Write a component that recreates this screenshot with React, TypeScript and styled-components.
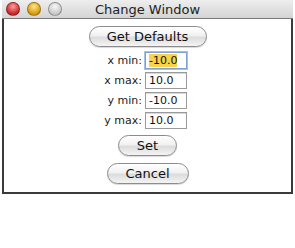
import { Fragment } from "react";
import styled, { createGlobalStyle } from "styled-components";

const GlobalStyle = createGlobalStyle`
    html, body {
        margin: 0;
        padding: 0;
        background: #ffffff;
    }
`

const Page = styled.div`
    width: 295px;
    height: 248px;
    padding: 0 2px;
    box-sizing: border-box;
    background: #ffffff;
`

const Window = styled.div`
    width: 100%;
    height: 194px;
    display: flex;
    flex-direction: column;
    box-sizing: border-box;
    border: 2px solid #3a3a3a;
    border-top: none;
    background: #ffffff;
`

const TitleBar = styled.div`
    height: 19px;
    margin: 0 -2px;
    display: flex;
    align-items: center;
    position: relative;
    background: linear-gradient(#eeeeee, #d4d4d4);
    border-bottom: 1px solid #7a7a7a;
    box-sizing: border-box;
`

const Lights = styled.div`
    display: flex;
    gap: 7px;
    padding-left: 4px;
`

const Light = styled.span<{ $color: string; $shine: string }>`
    width: 14px;
    height: 14px;
    border-radius: 50%;
    box-sizing: border-box;
    border: 1px solid rgba(0, 0, 0, 0.3);
    background: radial-gradient(circle at 50% 30%, ${p => p.$shine} 0%, ${p => p.$color} 70%);
`

const Title = styled.div`
    position: absolute;
    left: 0;
    right: 0;
    text-align: center;
    font-family: "DejaVu Sans", sans-serif;
    font-size: 13px;
    color: #222;
    pointer-events: none;
`

const Content = styled.div`
    flex: 1;
    display: flex;
    flex-direction: column;
    align-items: center;
    padding-top: 7px;
`

const PillButton = styled.button<{ $w: number; $top?: number }>`
    width: ${p => p.$w}px;
    height: 21px;
    margin-top: ${p => p.$top ?? 0}px;
    padding: 0;
    border-radius: 11px;
    border: 1px solid #8c8c8c;
    background: linear-gradient(#ffffff 0%, #f1f1f1 45%, #dcdcdc 55%, #f4f4f4 100%);
    box-shadow: 0 1px 1px rgba(0, 0, 0, 0.15);
    font-family: "DejaVu Sans", sans-serif;
    font-size: 13px;
    color: #111;
`

const Fields = styled.div`
    display: grid;
    grid-template-columns: 1fr 1fr;
    column-gap: 3px;
    row-gap: 3px;
    width: 100%;
    padding-right: 8px;
    box-sizing: border-box;
    margin: 5px 0 6px;
`

const Label = styled.label`
    justify-self: end;
    align-self: center;
    font-family: "DejaVu Sans", sans-serif;
    font-size: 11px;
    color: #222;
`

const Field = styled.div<{ $focus?: boolean }>`
    justify-self: start;
    width: 42px;
    height: 17px;
    box-sizing: border-box;
    border: 1px solid ${p => (p.$focus ? "#7d9fd3" : "#9a9a9a")};
    box-shadow: ${p => (p.$focus ? "0 0 0 1px #a9c1e6" : "inset 0 1px 0 #d8d8d8")};
    padding: 0 3px;
    display: flex;
    align-items: center;
    font-family: "DejaVu Sans", sans-serif;
    font-size: 11px;
    color: #111;
`

const Selected = styled.span`
    background: #f6d34a;
`

const rows = [
    { label: "x min:", value: "-10.0", focus: true },
    { label: "x max:", value: "10.0" },
    { label: "y min:", value: "-10.0" },
    { label: "y max:", value: "10.0" },
]

export default function App() {
    return (
        <Page>
            <GlobalStyle />
            <Window>
                <TitleBar>
                    <Lights>
                        <Light $color="#c8252b" $shine="#ff9d9d" />
                        <Light $color="#d79a0c" $shine="#ffe58a" />
                        <Light $color="#c9c9c9" $shine="#f6f6f6" />
                    </Lights>
                    <Title>Change Window</Title>
                </TitleBar>
                <Content>
                    <PillButton $w={118}>Get Defaults</PillButton>
                    <Fields>
                        {rows.map(r => (
                            <Fragment key={r.label}>
                                <Label>{r.label}</Label>
                                <Field $focus={r.focus}>
                                    {r.focus ? <Selected>{r.value}</Selected> : r.value}
                                </Field>
                            </Fragment>
                        ))}
                    </Fields>
                    <PillButton $w={59}>Set</PillButton>
                    <PillButton $w={82} $top={7}>Cancel</PillButton>
                </Content>
            </Window>
        </Page>
    )
}
